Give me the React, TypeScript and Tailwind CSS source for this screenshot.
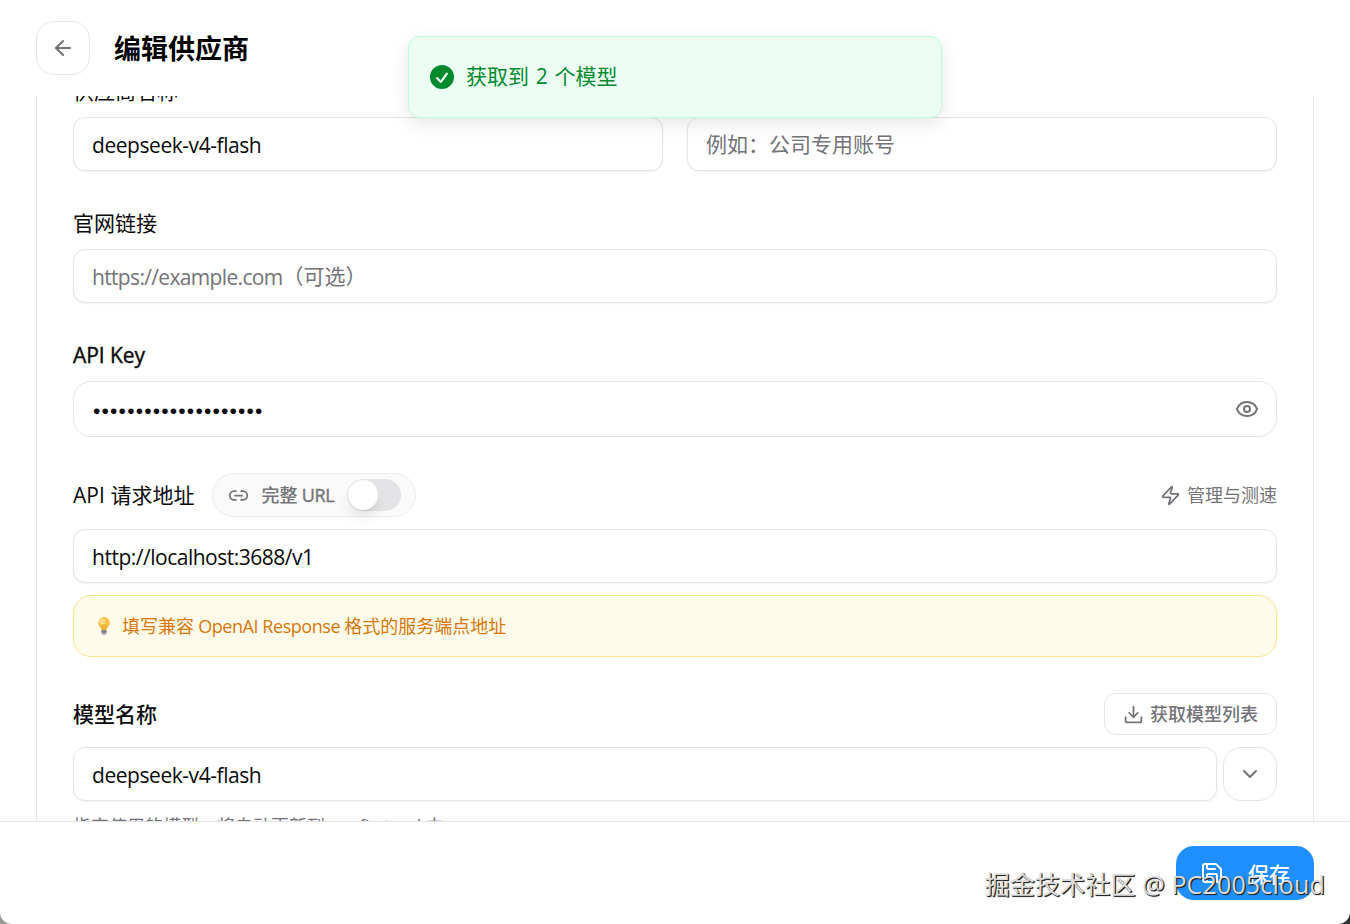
import type { ReactNode } from 'react'
import { ArrowLeft, ChevronDown, Download, Eye, Link2, Save, Zap } from 'lucide-react'
import { clsx } from 'clsx'

const MASKED_KEY = '•'.repeat(20)

interface TextBoxProps {
  children: ReactNode
  placeholder?: boolean
  className?: string
}

function TextBox({ children, placeholder, className }: TextBoxProps) {
  return (
    <div
      className={clsx(
        'flex h-[54px] items-center rounded-xl border border-[#e4e4e7] bg-white px-[18px] shadow-xs',
        placeholder ? 'text-[#737378]' : 'pt-0.5 text-[#0a0a0b]',
        className
      )}
    >
      {children}
    </div>
  )
}

function FieldLabel({ children, className }: { children: ReactNode; className?: string }) {
  return <label className={clsx('block h-[30px] leading-8', className)}>{children}</label>
}

function Latin({ children, className }: { children: ReactNode; className?: string }) {
  return <span className={clsx('whitespace-pre', className ?? 'tracking-[-0.45px]')}>{children}</span>
}

function Toast() {
  return (
    <div className="absolute left-[408px] top-9 flex h-[82px] w-[534px] items-center rounded-xl border border-[#bffcd9] bg-[#ecfdf3] pl-[18px] text-[#008a2e] shadow-[0_6px_18px_rgba(0,0,0,0.1)]">
      <svg viewBox="0 0 20 20" fill="currentColor" className="size-[30px]">
        <path
          fillRule="evenodd"
          clipRule="evenodd"
          d="M10 18a8 8 0 100-16 8 8 0 000 16zm3.857-9.809a.75.75 0 00-1.214-.882l-3.483 4.79-1.88-1.88a.75.75 0 10-1.06 1.061l2.5 2.5a.75.75 0 001.137-.089l4-5.5z"
        />
      </svg>
      <span className="ml-[9px] pb-0.5 [word-spacing:1.3px]">获取到 2 个模型</span>
    </div>
  )
}

function BulbIcon() {
  return (
    <svg viewBox="0 0 16 20" className="h-5 w-4">
      <path d="M8 1a5.8 5.8 0 0 0-5.8 5.8c0 3.2 2.7 4.2 3.1 7.2h5.4c.4-3 3.1-4 3.1-7.2A5.8 5.8 0 0 0 8 1z" fill="#fbbf45" />
      <circle cx="6.4" cy="5.4" r="3" fill="#fddc85" />
      <path d="M6.3 8.5 7.2 14h1.6l.9-5.5" fill="none" stroke="#eda233" strokeWidth=".8" />
      <path d="M5.4 14h5.2v3L9.4 18.4H6.6L5.4 17z" fill="#98939f" />
      <path d="M5.4 15.6h5.2" stroke="#6e6878" strokeWidth=".7" />
    </svg>
  )
}

function Header() {
  return (
    <header className="flex h-24 shrink-0 items-start px-9 pt-[21px]">
      <button className="flex size-[54px] items-center justify-center rounded-[18px] border border-[#e4e4e7] text-[#737378]">
        <ArrowLeft className="size-6" />
      </button>
      <h1 className="ml-6 text-[27px] font-bold leading-14 text-black">编辑供应商</h1>
    </header>
  )
}

function ProviderForm() {
  return (
    <div className="-mt-[21px] flex flex-col gap-9 px-9">
      <div className="grid grid-cols-2 items-end gap-6">
        <div className="flex flex-col gap-3">
          <FieldLabel>供应商名称</FieldLabel>
          <TextBox>
            <Latin>deepseek-v4-flash</Latin>
          </TextBox>
        </div>
        <TextBox placeholder>例如：公司专用账号</TextBox>
      </div>

      <div className="flex flex-col gap-3">
        <FieldLabel>官网链接</FieldLabel>
        <TextBox placeholder>
          <Latin className="pt-px tracking-[-0.66px]">https://example.com</Latin>（可选）
        </TextBox>
      </div>

      {/* API key */}
      <div className="flex flex-col gap-3">
        <FieldLabel>
          <Latin className="tracking-[-0.05px] [-webkit-text-stroke:0.4px_#0a0a0b]">API Key</Latin>
        </FieldLabel>
        <div className="flex h-14 items-center justify-between rounded-[18px] border border-[#e4e4e7] px-[18px]">
          <span className="pl-px pt-1 font-['Liberation_Sans',sans-serif] tracking-[1.18px]">{MASKED_KEY}</span>
          <Eye className="-mr-px size-6 text-[#737378]" />
        </div>
      </div>

      {/* Endpoint */}
      <div className="flex flex-col gap-3">
        <div className="flex h-11 items-center">
          <label>
            <Latin className="tracking-[0.05px]">API </Latin>请求地址
          </label>
          <div className="ml-[18px] flex h-11 w-[204px] items-center rounded-full border border-[#ececee] bg-[#fafafa] pl-[15px] text-lg font-medium text-[#737378]">
            <Link2 className="size-[21px]" />
            <span className="ml-3">
              完整<Latin className="tracking-[-0.4px] [-webkit-text-stroke:0.4px_#737378]"> URL</Latin>
            </span>
            <span className="ml-auto mr-3.5 flex h-8 w-[54px] items-center rounded-full bg-[#e4e4e7] pl-px">
              <span className="size-[30px] rounded-full bg-white shadow-lg" />
            </span>
          </div>
          <button className="ml-auto flex items-center gap-1.5 text-lg text-[#737378]">
            <Zap className="size-[21px]" />
            管理与测速
          </button>
        </div>
        <TextBox>
          <Latin className="tracking-[-0.49px]">http://localhost:3688/v1</Latin>
        </TextBox>
        <div className="flex h-[62px] items-center rounded-[18px] border border-[#fae58c] bg-[#fffbeb] pl-[22px] text-lg text-[#d97708]">
          <BulbIcon />
          <span className="ml-2.5">
            填写兼容<Latin> OpenAI Response </Latin>格式的服务端点地址
          </span>
        </div>
      </div>

      {/* Model */}
      <div className="flex flex-col gap-3">
        <div className="flex h-[42px] items-center justify-between">
          <label className="font-medium">模型名称</label>
          <button className="flex h-[42px] w-[173px] items-center justify-center gap-1.5 rounded-xl border border-[#e4e4e7] text-lg font-medium text-[#737378]">
            <Download className="size-[21px]" />
            获取模型列表
          </button>
        </div>
        <div className="flex gap-1.5">
          <TextBox className="flex-1">
            <Latin>deepseek-v4-flash</Latin>
          </TextBox>
          <button className="flex size-[54px] items-center justify-center rounded-[18px] border border-[#e4e4e7] text-[#737378]">
            <ChevronDown className="size-6" />
          </button>
        </div>
        <p className="text-lg leading-[27px] text-[#737378]">
          指定使用的模型，将自动更新到<Latin className="tracking-[-0.22px]"> config.toml </Latin>中
        </p>
      </div>
    </div>
  )
}

export default function App() {
  return (
    <div className="h-[924px] w-[1350px] bg-linear-to-r from-[#9b9b95] to-[#333333]">
      <div className="relative flex h-full flex-col overflow-hidden rounded-b-xl bg-white font-['Open_Sans','Noto_Sans_CJK_SC',sans-serif] text-[21px] leading-[30px] text-[#0a0a0b]">
        <Header />
        <main className="mx-9 h-[725px] shrink-0 overflow-hidden border-x border-[#e4e4e7]">
          <ProviderForm />
        </main>
        <footer className="flex flex-1 items-start justify-end border-t border-[#e4e4e7] px-9 pt-6">
          <button className="flex h-[54px] w-[138px] items-center gap-6 rounded-[18px] bg-[#1f8fff] pl-6 font-medium text-white">
            <Save className="size-6" />
            <span className="pt-0.5">保存</span>
          </button>
        </footer>

        <Toast />
        <div className="absolute right-[25px] top-[866px] whitespace-pre text-[25px] leading-9 tracking-[0.15px] text-[#dcdcdc] [text-shadow:1px_1px_1px_#222,1px_1px_0_#333]">
          掘金技术社区 @ PC2005cloud
        </div>
      </div>
    </div>
  )
}
